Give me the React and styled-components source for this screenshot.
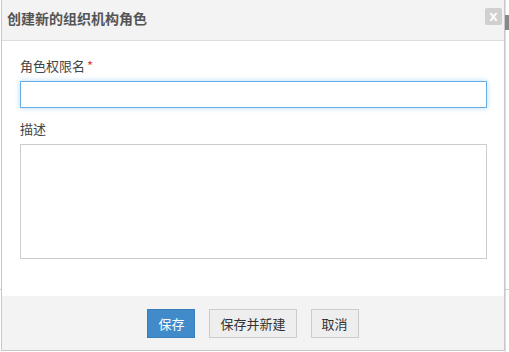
import React, { useState } from 'react';
import styled, { createGlobalStyle } from 'styled-components';

const GlobalStyle = createGlobalStyle`
  html, body {
    margin: 0;
    padding: 0;
    background: #fff;
    font-family: 'Noto Sans CJK SC', 'Liberation Sans', sans-serif;
    overflow: hidden;
  }
`;

const Page = styled.div`
  position: relative;
  width: 509px;
  height: 352px;
`;

const PageEdge = styled.div`
  position: absolute;
  top: 0;
  left: 505px;
  width: 1px;
  height: 352px;
  background: #ddd;
`;

const PageTab = styled.div`
  position: absolute;
  top: 15px;
  left: 505px;
  width: 4px;
  height: 15px;
  background: #888;
`;

const PageRule = styled.div`
  position: absolute;
  top: 289px;
  left: ${(props) => props.left}px;
  width: 6px;
  height: 1px;
  background: #ccc;
`;

const Dialog = styled.div`
  position: absolute;
  top: 0;
  left: 1px;
  width: 502px;
  border: 1px solid #c8c8c8;
  border-top: none;
  background: #fff;
  display: flex;
  flex-direction: column;
`;

const Header = styled.div`
  height: 40px;
  background: #f3f3f3;
  border-bottom: 1px solid #ddd;
  display: flex;
  align-items: center;
  justify-content: space-between;
  padding: 0 2px 0 5px;
`;

const Title = styled.h3`
  margin: 0 0 4px;
  font-size: 14px;
  font-weight: bold;
  color: #555;
`;

const Close = styled.button`
  width: 17px;
  height: 17px;
  margin-bottom: 7px;
  padding: 0 0 2px;
  border: none;
  border-radius: 2px;
  background: #d0d0d0;
  color: #fff;
  font-family: 'Liberation Sans', sans-serif;
  font-size: 15px;
  font-weight: bold;
  line-height: 15px;
  cursor: pointer;
`;

const Body = styled.div`
  height: 255px;
  box-sizing: border-box;
  padding: 16px 17px 0 18px;
  display: flex;
  flex-direction: column;
`;

const Label = styled.label`
  font-size: 13px;
  line-height: 18px;
  color: #444;
  margin-bottom: ${(props) => props.gap}px;
`;

const Required = styled.span`
  color: #e4393c;
  margin-left: 2px;
`;

const TextInput = styled.input`
  box-sizing: border-box;
  width: 467px;
  height: 27px;
  margin: 0 0 12px;
  padding: 3px 6px;
  border: 1px solid #66afe9;
  box-shadow: 0 0 5px rgba(102, 175, 233, 0.5);
  font-size: 13px;
  outline: none;
`;

const TextArea = styled.textarea`
  box-sizing: border-box;
  width: 467px;
  height: 115px;
  margin: 0;
  padding: 4px 6px;
  border: 1px solid #ccc;
  resize: none;
  font-size: 13px;
  font-family: inherit;
  outline: none;
`;

const Footer = styled.div`
  height: 54px;
  box-sizing: border-box;
  background: #f3f3f3;
  display: flex;
  justify-content: center;
  align-items: flex-start;
  gap: 14px;
  padding-top: 13px;
`;

const Button = styled.button`
  box-sizing: border-box;
  height: 29px;
  padding: 0 10px;
  border: 1px solid ${(props) => (props.primary ? '#3a7dbb' : '#ccc')};
  background: ${(props) => (props.primary ? '#428bca' : '#eee')};
  color: ${(props) => (props.primary ? '#fff' : '#333')};
  font-family: inherit;
  font-size: 13px;
  cursor: pointer;
`;

export default function App() {
  const [name, setName] = useState('');
  const [desc, setDesc] = useState('');

  return (
    <Page>
      <GlobalStyle />
      <PageEdge />
      <PageTab />
      <PageRule left={0} />
      <PageRule left={504} />
      <Dialog>
        <Header>
          <Title>创建新的组织机构角色</Title>
          <Close>x</Close>
        </Header>
        <Body>
          <Label gap={6}>
            角色权限名<Required>*</Required>
          </Label>
          <TextInput value={name} onChange={(e) => setName(e.target.value)} />
          <Label gap={6}>描述</Label>
          <TextArea value={desc} onChange={(e) => setDesc(e.target.value)} />
        </Body>
        <Footer>
          <Button primary>保存</Button>
          <Button>保存并新建</Button>
          <Button>取消</Button>
        </Footer>
      </Dialog>
    </Page>
  );
}
